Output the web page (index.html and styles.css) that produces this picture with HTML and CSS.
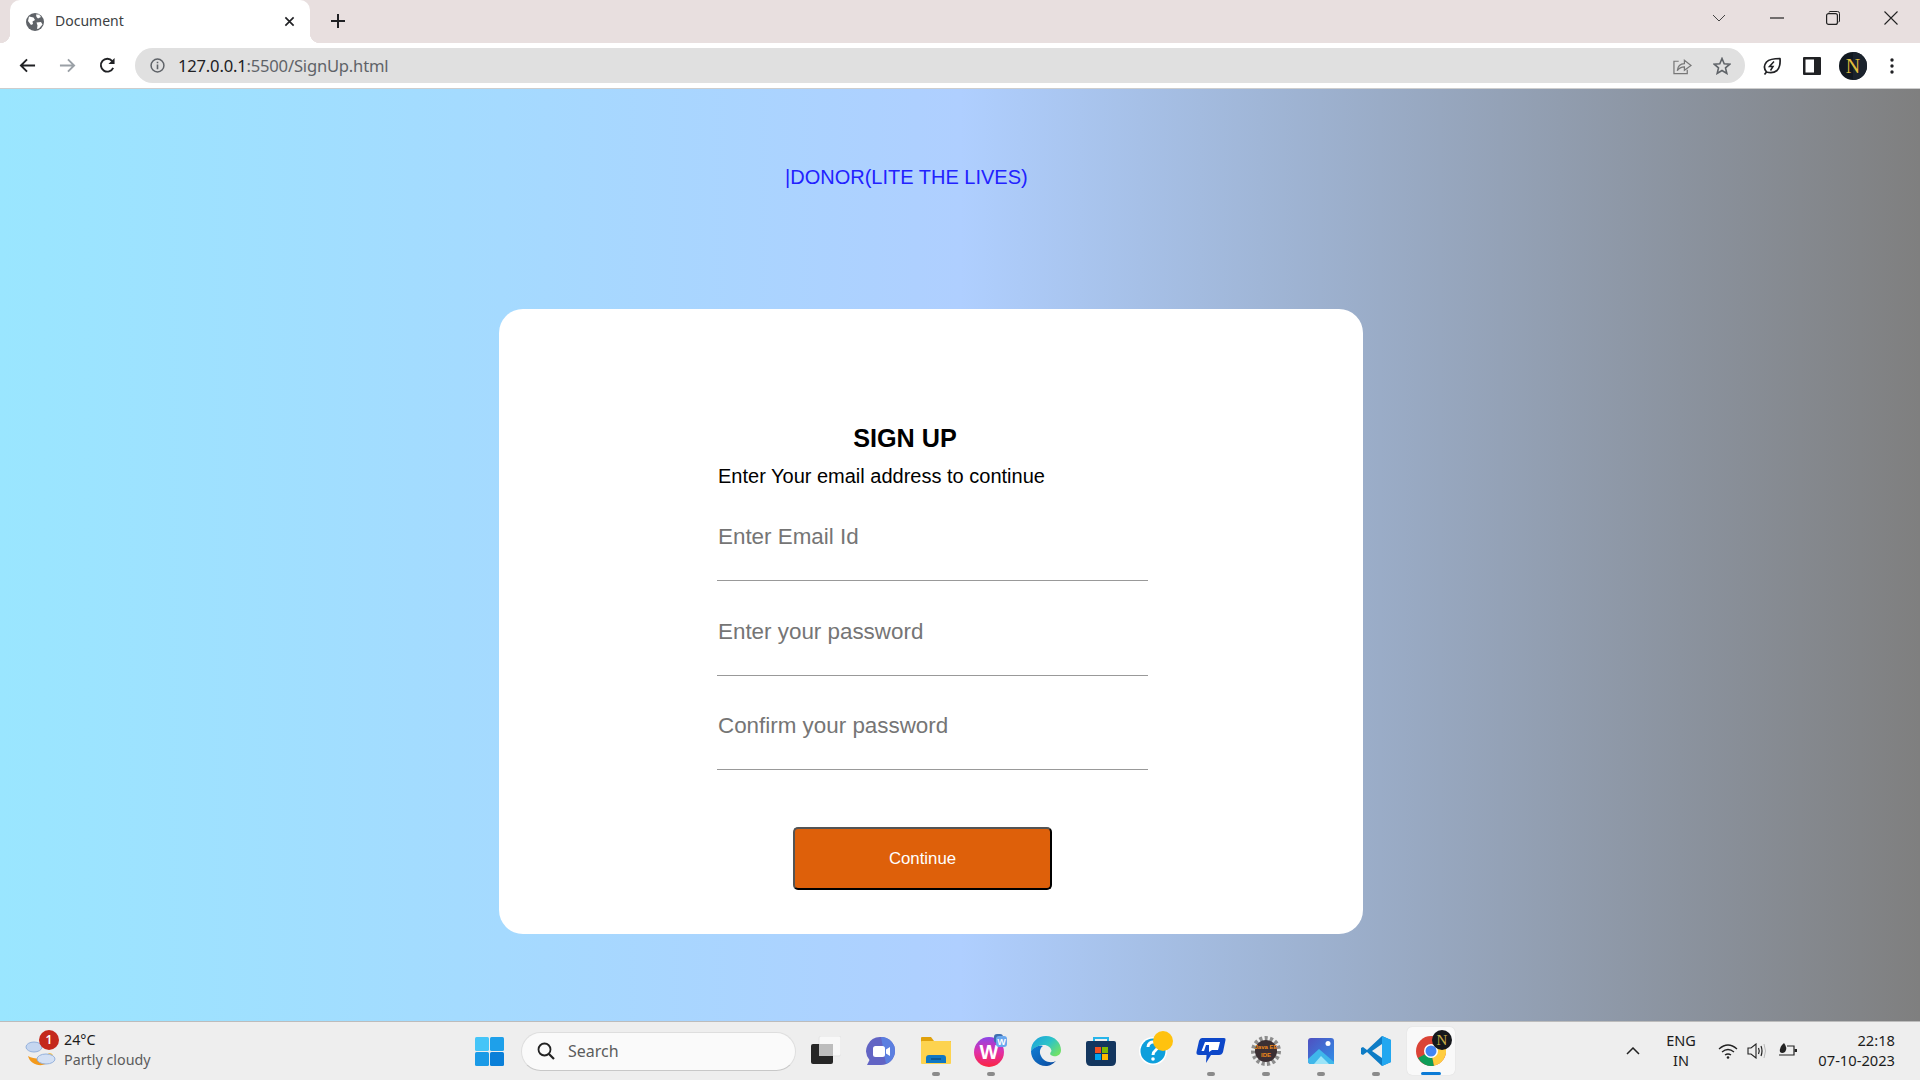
FILE: index.html
```html
<!DOCTYPE html>
<html lang="en">
<head>
<meta charset="utf-8">
<title>Document</title>
<link rel="stylesheet" href="styles.css">
</head>
<body>
<div class="screen">
  <header class="chrome">
    <div class="tabstrip">
      <div class="tab">
        <svg class="favicon" viewBox="0 0 18 18"><circle cx="9" cy="9" r="9" fill="#5f6368"/><path d="M3 3.500 7.500 4.500 9 7 6.500 8.500 7 11 5 12 2 8ZM10 1.500 13 1.500 15 4 12 5.500 10.500 4ZM10.500 9.500 15 9 16.500 11.500 13 15.500 11 16 11.500 12.500Z" fill="#fff"/></svg>
        <span class="tab-title">Document</span>
        <svg class="tab-close" viewBox="0 0 12 12"><path d="M1.500 1.500 10.500 10.500M10.500 1.500 1.500 10.500" stroke="#202124" stroke-width="1.800" fill="none"/></svg>
      </div>
      <svg class="new-tab" viewBox="0 0 16 16"><path d="M8 1V15M1 8H15" stroke="#202124" stroke-width="2" fill="none"/></svg>
      <div class="window-controls">
        <svg class="win-chevron" viewBox="0 0 14 8"><path d="M1 1 7 7 13 1" stroke="#444" stroke-width="1" fill="none"/></svg>
        <svg class="win-min" viewBox="0 0 14 2"><path d="M0 1H14" stroke="#222" stroke-width="1.200"/></svg>
        <svg class="win-max" viewBox="0 0 14 14"><path d="M3 1.500Q3 .5 4 .5H11.500Q13.500 .5 13.500 2.500V10Q13.500 11 12.500 11" stroke="#222" fill="none"/><rect x=".6" y="2.600" width="10.800" height="10.800" rx="2" stroke="#222" stroke-width="1.200" fill="none"/></svg>
        <svg class="win-close" viewBox="0 0 14 14"><path d="M.5 .5 13.500 13.500M13.500 .5 .5 13.500" stroke="#222" stroke-width="1.100" fill="none"/></svg>
      </div>
    </div>
    <div class="toolbar">
      <svg class="nav-icon" viewBox="0 0 18 16"><path d="M17 8H2M8.500 1.500 2 8 8.500 14.500" stroke="#202124" stroke-width="2" fill="none"/></svg>
      <svg class="nav-icon" viewBox="0 0 18 16"><path d="M1 8H16M9.500 1.500 16 8 9.500 14.500" stroke="#9aa0a6" stroke-width="2" fill="none"/></svg>
      <svg class="nav-icon" viewBox="0 0 18 18"><path d="M15 11.500A6.800 6.800 0 1 1 14 4.300" stroke="#202124" stroke-width="2" fill="none"/><path d="M16.500 1V7.500H10Z" fill="#202124"/></svg>
      <div class="omnibox">
        <svg class="info-icon" viewBox="0 0 14 14"><circle cx="7" cy="7" r="6" stroke="#5f6368" stroke-width="1.400" fill="none"/><path d="M7 6V10.500M7 3.500V5" stroke="#5f6368" stroke-width="1.500"/></svg>
        <span class="url"><span class="url-host">127.0.0.1</span>:5500/SignUp.html</span>
        <svg class="omni-share" viewBox="0 0 20 18"><path d="M6 4H1V17H15V13" stroke="#777" stroke-width="1.300" fill="none"/><path d="M4.500 14C5 9 8 6.500 12 6.500V3L19 8.500 12 13.500V10C9 10 6.500 11 4.500 14Z" stroke="#777" stroke-width="1.300" fill="none"/></svg>
        <svg class="omni-star" viewBox="0 0 18 18"><path d="M9 1.500 11.200 6.700 16.800 7.200 12.500 10.900 13.800 16.400 9 13.500 4.200 16.400 5.500 10.900 1.200 7.200 6.800 6.700Z" stroke="#5f6368" stroke-width="1.600" fill="none"/></svg>
      </div>
      <svg class="ext-leaf" viewBox="0 0 18 18"><path d="M1.500 17.500 3.500 15C1 12 1 8 3.500 5 6 2.500 12 1.500 17 1.500 17.500 7 16.500 11 14 13.500 11 16 7 16 3.500 15" stroke="#202124" stroke-width="1.700" fill="none" stroke-linejoin="round"/><path d="M11 4.500 6.500 9.500H10L7.500 13.500" stroke="#202124" stroke-width="1.500" fill="none"/></svg>
      <svg class="side-panel" viewBox="0 0 18 18"><rect width="18" height="18" rx="1" fill="#202124"/><rect x="2.500" y="2.500" width="8.500" height="13" fill="#fff"/></svg>
      <div class="avatar"><svg viewBox="0 0 28 28"><circle cx="14" cy="14" r="14" fill="#111820"/><path d="M14 0A14 14 0 0 1 14 28Z" fill="#1b232d"/><text x="14" y="21" class="avatar-n">N</text></svg></div>
      <svg class="kebab" viewBox="0 0 4 16"><circle cx="2" cy="2" r="1.700" fill="#202124"/><circle cx="2" cy="8" r="1.700" fill="#202124"/><circle cx="2" cy="14" r="1.700" fill="#202124"/></svg>
    </div>
  </header>

  <main class="page">
    <div class="brand">|DONOR(LITE THE LIVES)</div>
    <section class="card">
      <form class="form">
        <h1 class="form-title">SIGN UP</h1>
        <p class="form-sub">Enter Your email address to continue</p>
        <input class="field" type="email" placeholder="Enter Email Id">
        <input class="field" type="password" placeholder="Enter your password">
        <input class="field field-last" type="password" placeholder="Confirm your password">
        <button class="continue" type="button">Continue</button>
      </form>
    </section>
  </main>

  <footer class="taskbar">
    <div class="weather">
      <div class="weather-icon">
        <svg viewBox="0 0 34 34"><path d="M3 22C5 30 14 33 21 30 25 28 27 25 28 21 23 25 10 26 3 22Z" fill="#f39a1c"/><path d="M20 24Q24 16 28 21L28 24Z" fill="#f7c04a"/><ellipse cx="9" cy="13" rx="8" ry="5" fill="#c5d6f0" stroke="#94b1dc"/><ellipse cx="21" cy="25" rx="9" ry="5" fill="#d3e0f4" stroke="#94b1dc"/></svg>
        <span class="weather-badge">1</span>
      </div>
      <div class="weather-text"><div class="temp">24°C</div><div class="cond">Partly cloudy</div></div>
    </div>
    <div class="apps">
      <div class="app app-start"><svg class="ic29" viewBox="0 0 29 29"><rect width="14" height="14" rx="1.500" fill="#45c5f8"/><rect x="15" width="14" height="14" rx="1.500" fill="#1ea0ea"/><rect y="15" width="14" height="14" rx="1.500" fill="#1a9ae6"/><rect x="15" y="15" width="14" height="14" rx="1.500" fill="#0a7fd8"/></svg></div>
      <div class="search">
        <svg class="search-icon" viewBox="0 0 18 18"><circle cx="7.500" cy="7.500" r="6" stroke="#222" stroke-width="1.800" fill="none"/><path d="M12 12 17 17" stroke="#222" stroke-width="2.200"/></svg>
        <span>Search</span>
      </div>
      <div class="app"><svg class="ic30" viewBox="0 0 30 30"><rect x="8" y="0" width="22" height="20" rx="2" fill="#f8f8f8" stroke="#e4e4e4"/><rect x="0" y="8" width="22" height="20" rx="2" fill="#262626"/><rect x="8" y="8" width="14" height="12" fill="#bdbdbd"/></svg></div>
      <div class="app"><svg class="ic30" viewBox="0 0 30 30"><path d="M15 1A14 14 0 0 1 15 29H1L3.500 24A14 14 0 0 1 15 1Z" fill="#6264c4"/><path d="M15 1A14 14 0 0 1 29 15 14 14 0 0 1 20 28Z" fill="#5b7fe0"/><rect x="7" y="10" width="12" height="11" rx="2.500" fill="#fff"/><path d="M20 13.500 24 11V20L20 17.500Z" fill="#fff"/></svg></div>
      <div class="app has-dot"><svg class="ic30" viewBox="0 0 30 30"><path d="M0 2Q0 1 1 1H10L13 5H30V27H0Z" fill="#e0a10c"/><rect y="5" width="30" height="23" rx="1" fill="#fdd34f"/><path d="M5 27V22Q5 19 8 19H22Q25 19 25 22V27Z" fill="#0f77c4"/><path d="M10 23H20" stroke="#0a4f88" stroke-width="1.500"/></svg></div>
      <div class="app has-dot"><svg class="ic34" viewBox="0 0 34 34"><defs><linearGradient id="wps" x1="0" y1="0" x2="0" y2="1"><stop offset="0" stop-color="#8a45e8"/><stop offset=".5" stop-color="#e030a8"/><stop offset="1" stop-color="#fb2440"/></linearGradient></defs><circle cx="15" cy="18" r="15" fill="url(#wps)"/><text x="15" y="25" class="wps-w">W</text><rect x="20" y="0" width="9" height="9" rx="3" fill="#3f6fb0"/><rect x="22" y="2" width="11" height="11" rx="3" fill="#6aa8ee"/><text x="27.500" y="11" class="wps-mini">W</text></svg></div>
      <div class="app"><svg class="ic30" viewBox="0 0 30 30"><defs><linearGradient id="edge" x1="0" y1="0" x2="1" y2=".7"><stop offset="0" stop-color="#1a9ede"/><stop offset=".55" stop-color="#2cc3c8"/><stop offset="1" stop-color="#6fe06a"/></linearGradient><linearGradient id="edge2" x1="0" y1="0" x2="1" y2="1"><stop offset="0" stop-color="#0f7fd6"/><stop offset="1" stop-color="#0c4a9e"/></linearGradient></defs><path d="M0 15C0 6 7 0 15 0 24 0 30 7 30 14 30 19 26 21 22 20 18 19 19 17 20.500 15 20 11 16 8.500 12 9 7 9.500 3 12 0 15Z" fill="url(#edge)"/><path d="M0 15C3 11 8 9 12 10 9 12 8 16 10 20 12 25 19 28 25 25 21 29 18 30 15 30 6 30 0 23 0 15Z" fill="url(#edge2)"/></svg></div>
      <div class="app"><svg class="ic30" viewBox="0 0 30 30"><path d="M8 6V2H22V6" stroke="#27b5ea" stroke-width="2" fill="none"/><path d="M0 7Q0 5 2 5H28Q30 5 30 7V25Q30 30 25 30H5Q0 30 0 25Z" fill="#13365f"/><rect x="9" y="11" width="6" height="6" fill="#f25022"/><rect x="16" y="11" width="6" height="6" fill="#7fba00"/><rect x="9" y="18" width="6" height="6" fill="#00a4ef"/><rect x="16" y="18" width="6" height="6" fill="#ffb900"/></svg></div>
      <div class="app"><svg class="ic36" viewBox="0 0 36 36"><circle cx="15" cy="20" r="14" fill="#fff"/><circle cx="15" cy="20" r="12.500" fill="#0e9fdc"/><path d="M10 16C10 9 21 10 20 16 19 20 15 19 15 24" stroke="#fff" stroke-width="3" fill="none"/><circle cx="15" cy="28" r="1.800" fill="#fff"/><circle cx="25" cy="10" r="10" fill="#ffc20e"/></svg></div>
      <div class="app has-dot"><svg class="ic30" viewBox="0 0 30 28"><path d="M6 1H28Q30 1 29.500 3L27 15Q26 18 23 18H15L10 26 10.500 18H3Q0 18 .5 15L3 4Q4 1 6 1Z" fill="#0d47c9"/><path d="M9 5H24L22 13H16L13 15V8H10L8 14H5.500Z" fill="#fff"/></svg></div>
      <div class="app has-dot"><svg class="ic30" viewBox="0 0 30 30"><circle cx="15" cy="15" r="12.500" fill="none" stroke="#8c8c8c" stroke-width="5" stroke-dasharray="3 2.200"/><circle cx="15" cy="15" r="11" fill="#3b2f33"/><text x="15" y="13" class="java-t">Java EE</text><text x="15" y="21" class="java-t">IDE</text></svg></div>
      <div class="app has-dot"><svg class="ic26" viewBox="0 0 26 26"><defs><linearGradient id="ph" x1="0" y1="0" x2="1" y2="1"><stop offset="0" stop-color="#5050c0"/><stop offset="1" stop-color="#2f8fe8"/></linearGradient></defs><rect width="26" height="26" rx="3" fill="url(#ph)"/><circle cx="20" cy="5.500" r="2.500" fill="#fff"/><path d="M0 21 11 11 26 24V26H3Q0 26 0 23Z" fill="#3fb7ea"/><path d="M6 26 13 18 21 26Z" fill="#9be4f8"/></svg></div>
      <div class="app has-dot"><svg class="ic30" viewBox="0 0 30 30"><path d="M21 0 30 4V26L21 30 6 16 2 19 0 18V12L2 11 6 14Z" fill="#0e7cc5"/><path d="M21 0 30 4V26L21 30Z" fill="#22a7f0"/><path d="M21 8V22L11 15Z" fill="#eeeeee"/></svg></div>
      <div class="app app-active">
        <svg class="ic30" viewBox="0 0 30 30"><circle cx="15" cy="15" r="15" fill="#db4437"/><path d="M15 15 2 22A15 15 0 0 0 18 29.700Z" fill="#0f9d58"/><path d="M15 15 18 29.700A15 15 0 0 0 29.800 12L15 8Z" fill="#ffcd40"/><circle cx="15" cy="15" r="7" fill="#fff"/><circle cx="15" cy="15" r="5.500" fill="#4285f4"/></svg>
        <svg class="chrome-profile" viewBox="0 0 20 20"><circle cx="10" cy="10" r="10" fill="#16181c"/><text x="10" y="15" class="chrome-n">N</text></svg>
      </div>
    </div>
    <div class="tray">
      <svg class="tray-caret" viewBox="0 0 14 8"><path d="M1 7 7 1 13 7" stroke="#222" stroke-width="1.500" fill="none"/></svg>
      <div class="lang">ENG<br>IN</div>
      <svg class="tray-wifi" viewBox="0 0 20 16"><path d="M1 6Q10 -2 19 6M4 9Q10 4 16 9M7 12Q10 10 13 12" stroke="#222" stroke-width="1.300" fill="none"/><circle cx="10" cy="14.500" r="1.300" fill="#222"/></svg>
      <svg class="tray-vol" viewBox="0 0 20 16"><path d="M1 5H4L9 1V15L4 11H1Z" stroke="#222" stroke-width="1.100" fill="none"/><path d="M11.500 5Q13 8 11.500 11M14 3Q16 8 14 13" stroke="#222" stroke-width="1.200" fill="none"/><path d="M17 1Q20 8 17 15" stroke="#bbb" stroke-width="1" fill="none"/></svg>
      <svg class="tray-batt" viewBox="0 0 20 16"><path d="M9 3H16V12H1" stroke="#222" stroke-width="1.200" fill="none"/><path d="M16.500 6H19V9H16.500Z" fill="#222"/><path d="M6 0Q1 4 2 9 4 11 7 9 10 5 6 0Z" fill="#222"/></svg>
      <div class="clock"><div>22:18</div><div>07-10-2023</div></div>
    </div>
  </footer>
</div>
</body>
</html>
```
FILE: styles.css
```css
* { box-sizing: border-box; }
html, body { margin: 0; padding: 0; height: 100%; overflow: hidden; }
body { font-family: "Liberation Sans", Arial, sans-serif; }
.screen { width: 1920px; height: 1080px; display: flex; flex-direction: column; overflow: hidden; }

/* Browser chrome */
.chrome { flex: none; height: 89px; display: flex; flex-direction: column; }
.tabstrip { height: 43px; background: #e8dfdf; display: flex; align-items: flex-start; padding-left: 10px; }
.tab { position: relative; width: 300px; height: 43px; background: #fff; border-radius: 10px 10px 0 0; display: flex; align-items: center; padding: 0 16px; font: 14px "Noto Sans", "Open Sans", sans-serif; color: #3c4043; }
.tab::before, .tab::after { content: ""; position: absolute; bottom: 0; width: 10px; height: 10px; }
.tab::before { left: -10px; background: radial-gradient(circle at 0 0, #e8dfdf 10px, #fff 10.500px); }
.tab::after { right: -10px; background: radial-gradient(circle at 100% 0, #e8dfdf 10px, #fff 10.500px); }
.favicon { width: 18px; height: 18px; flex: none; }
.tab-title { margin-left: 11px; flex: 1; position: relative; top: -1px; }
.tab-close { width: 11px; height: 11px; flex: none; margin-right: -1px; }
.new-tab { width: 16px; height: 16px; margin: 13px 0 0 20px; flex: none; }
.window-controls { margin-left: auto; height: 36px; display: flex; align-items: center; padding-right: 22px; }
.win-chevron { width: 14px; height: 8px; margin-right: 44px; }
.win-min { width: 14px; height: 2px; margin-right: 42px; }
.win-max { width: 14px; height: 14px; margin-right: 44px; }
.win-close { width: 14px; height: 14px; }

.toolbar { height: 46px; background: #fff; display: flex; align-items: center; border-bottom: 1px solid #cdcdcd; padding-left: 19px; }
.nav-icon { width: 17px; height: 17px; flex: none; margin-right: 23px; }
.omnibox { flex: none; width: 1610px; height: 35px; margin-left: -4px; border-radius: 18px; background: #e0e0e0; display: flex; align-items: center; padding: 0 14px 0 15px; }
.info-icon { width: 15px; height: 15px; flex: none; }
.url { margin-left: 13px; flex: 1; font: 16.600px "Noto Sans", "Open Sans", sans-serif; letter-spacing: -0.200px; color: #5f6368; }
.url-host { color: #202124; }
.omni-share { width: 19px; height: 18px; flex: none; margin-right: 21px; }
.omni-star { width: 18px; height: 18px; flex: none; }
.ext-leaf { width: 18px; height: 18px; flex: none; margin-left: 18px; }
.side-panel { width: 18px; height: 18px; flex: none; margin-left: 22px; }
.avatar { width: 28px; height: 28px; flex: none; margin-left: 18px; }
.avatar svg { display: block; width: 28px; height: 28px; }
.avatar-n { font: 20px "Liberation Serif", serif; fill: #e0bd3c; text-anchor: middle; }
.kebab { width: 4px; height: 16px; flex: none; margin-left: 23px; }

/* Page */
.page { flex: none; height: 932px; background: linear-gradient(to right, #9ae6ff 0%, #afcfff 50%, #7f7f7f 100%); display: flex; flex-direction: column; }
.brand { height: 220px; padding: 75px 0 0 785px; font-size: 20px; line-height: 26px; color: #2222ff; }
.card { margin-left: 499px; width: 864px; height: 625px; background: #fff; border-radius: 24px; padding: 114px 0 0 218px; }
.form { width: 431px; display: flex; flex-direction: column; align-items: flex-start; }
.form-title { margin: 0; width: 376px; font-size: 25.200px; line-height: 30px; font-weight: 700; text-align: center; color: #000; }
.form-sub { margin: 12px 0 0 1px; font-size: 20px; line-height: 23px; color: #000; }
.field { display: block; width: 431px; height: 64px; margin-top: 31px; padding: 0 1px 24px; border: 0; border-bottom: 1.500px solid #999; outline: 0; background: transparent; font: 22.400px "Liberation Sans", sans-serif; color: #000; }
.form-sub + .field { margin-top: 29px; }
.field-last { margin-top: 30px; }
.field::placeholder { color: #757575; opacity: 1; }
.continue { margin: 57px 0 0 76px; width: 259px; height: 63px; background: #de600a; border: 2px outset #000; border-radius: 5px; color: #fff; font: 16.800px "Liberation Sans", sans-serif; }

/* Taskbar */
.taskbar { flex: none; height: 59px; background: #eeeeee; border-top: 1px solid #bcbcbc; display: flex; align-items: center; font-family: "Noto Sans", "Open Sans", sans-serif; color: #1c1c1c; }
.weather { width: 461px; flex: none; display: flex; align-items: center; padding-left: 25px; }
.weather-icon { position: relative; width: 34px; height: 34px; flex: none; }
.weather-icon svg { display: block; width: 34px; height: 34px; }
.weather-badge { position: absolute; left: 14px; top: -4px; width: 20px; height: 20px; border-radius: 50%; background: #c4281c; color: #fff; font-size: 12px; line-height: 20px; text-align: center; font-weight: 600; }
.weather-text { margin: -2px 0 0 5px; font-size: 14.300px; line-height: 20px; }
.cond { color: #5c5c5c; }
.apps { flex: none; display: flex; align-items: center; }
.app { position: relative; width: 55px; height: 48px; flex: none; display: flex; align-items: center; justify-content: center; }
.app-start { width: 29px; margin: 0 17px 0 14px; }
.has-dot::after { content: ""; position: absolute; left: 50%; bottom: -1px; width: 8px; height: 4px; margin-left: -4px; border-radius: 2px; background: #8a8a8a; }
.app-active { width: 48px; margin-left: 4px; background: #f9f9f9; border-radius: 5px; box-shadow: 0 0 1px #ccc; }
.app-active::after { content: ""; position: absolute; left: 14px; bottom: 0; width: 20px; height: 3px; border-radius: 2px; background: #0c7bd6; }
.chrome-profile { position: absolute; right: 3px; top: 3px; width: 20px; height: 20px; }
.chrome-n { font: 15px "Liberation Serif", serif; fill: #c9ac47; text-anchor: middle; }
.ic29 { width: 29px; height: 29px; }
.ic30 { width: 30px; height: 30px; }
.ic34 { width: 34px; height: 34px; }
.ic36 { width: 36px; height: 36px; margin-top: -5px; }
.ic26 { width: 26px; height: 26px; }
.wps-w { font: 700 20px "Liberation Sans", sans-serif; fill: #fff; text-anchor: middle; }
.wps-mini { font: 700 9px "Liberation Sans", sans-serif; fill: #fff; text-anchor: middle; }
.java-t { font: 700 6px "Liberation Sans", sans-serif; fill: #f08a1a; text-anchor: middle; }
.search { width: 275px; height: 39px; flex: none; margin-right: 2px; display: flex; align-items: center; padding-left: 15px; background: #fafafa; border: 1px solid #dedede; border-bottom-color: #c8c8c8; border-radius: 20px; font-size: 16px; color: #5c5c5c; }
.search-icon { width: 18px; height: 18px; flex: none; margin-right: 13px; }
.tray { flex: 1; display: flex; align-items: center; padding-right: 25px; }
.tray-caret { width: 14px; height: 8px; margin-left: 171px; flex: none; }
.lang { width: 60px; margin-left: 11px; text-align: center; font-size: 14.500px; line-height: 20px; flex: none; margin-top: -2px; }
.tray-wifi { width: 20px; height: 16px; flex: none; margin-left: 7px; }
.tray-vol { width: 20px; height: 16px; flex: none; margin-left: 9px; }
.tray-batt { width: 20px; height: 16px; flex: none; margin-left: 11px; }
.clock { margin: -2px 0 0 auto; text-align: right; font-size: 14.700px; line-height: 20px; }
```
